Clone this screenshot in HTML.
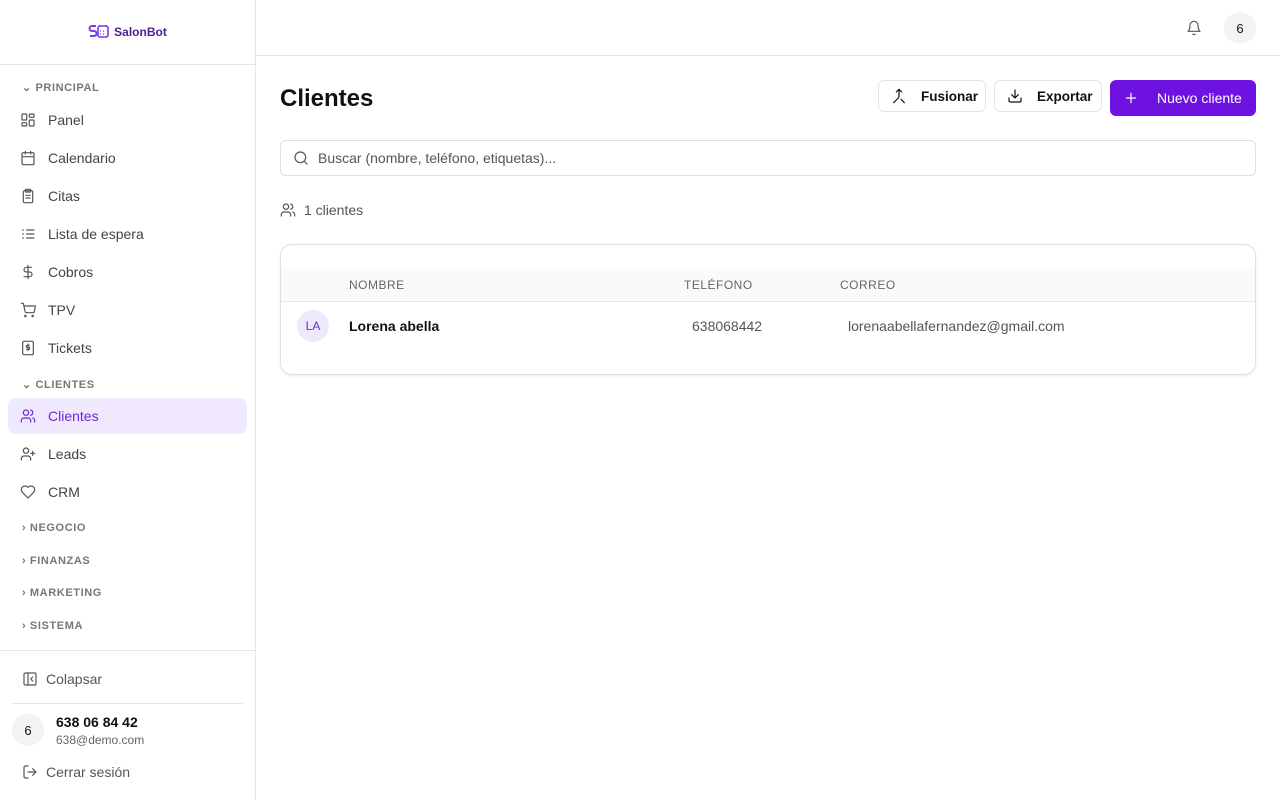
<!DOCTYPE html>
<html><head><meta charset="utf-8"><style>
*{box-sizing:border-box;margin:0;padding:0}
body{width:1280px;height:800px;font-family:"Liberation Sans",sans-serif;background:#fff;color:#111;position:relative;overflow:hidden}
.sb{position:absolute;left:0;top:0;width:256px;height:800px;border-right:1px solid #e5e5e5}
.logo{height:65px;border-bottom:1px solid #e5e5e5;display:flex;align-items:center;justify-content:center;gap:4px}
.logo b{font-size:12px;color:#4c1d95}
.sec{position:absolute;left:22px;font-size:11px;letter-spacing:.6px;color:#777;font-weight:bold;display:flex;align-items:center;gap:6px}
.it{position:absolute;left:8px;width:239px;height:36px;border-radius:8px;display:flex;align-items:center;padding-left:12px;gap:12px;font-size:14px;color:#444}
.it svg,.ic{width:16px;height:16px;fill:none;stroke:#555;stroke-width:1.8;stroke-linecap:round;stroke-linejoin:round}
.it.on{background:#f0e8fd;color:#6d28d9}
.it.on svg{stroke:#6d28d9}
.top{position:absolute;left:256px;top:0;right:0;height:56px;border-bottom:1px solid #e5e5e5}
.btn{position:absolute;height:32px;border:1px solid #e5e5e5;border-radius:6px;display:flex;align-items:center;font-size:14px;font-weight:bold;gap:14px;padding-left:12px;background:#fff}
</style></head><body>
<div class="sb">
<div class="logo"><svg width="22" height="18" viewBox="0 0 22 18"><path d="M8 3H4a2 2 0 0 0 0 5h2a2.5 2.5 0 0 1 0 5H2" stroke="#7c3aed" stroke-width="2" fill="none"/><rect x="10" y="3" width="10" height="11" rx="2" stroke="#7c3aed" stroke-width="1.6" fill="none"/><path d="M12 2v2M18 2v2M12 8h1M15 8h1M12 11h1M15 11h1" stroke="#7c3aed" stroke-width="1.3"/></svg><b>SalonBot</b></div>
<div class="sec" style="top:81px">⌄ PRINCIPAL</div>
<div class="it" style="top:102px"><svg viewBox="0 0 24 24"><rect x="3" y="3" width="7" height="9" rx="1"/><rect x="14" y="3" width="7" height="5" rx="1"/><rect x="14" y="12" width="7" height="9" rx="1"/><rect x="3" y="16" width="7" height="5" rx="1"/></svg>Panel</div>
<div class="it" style="top:140px"><svg viewBox="0 0 24 24"><rect x="3" y="4" width="18" height="18" rx="2"/><path d="M16 2v4M8 2v4M3 10h18"/></svg>Calendario</div>
<div class="it" style="top:178px"><svg viewBox="0 0 24 24"><rect x="5" y="4" width="14" height="18" rx="2"/><rect x="8" y="2" width="8" height="4" rx="1"/><path d="M9 11h6M9 15h6"/></svg>Citas</div>
<div class="it" style="top:216px"><svg viewBox="0 0 24 24"><path d="M10 6h11M10 12h11M10 18h11M4 6h1M4 12h1M4 18h1"/></svg>Lista de espera</div>
<div class="it" style="top:254px"><svg viewBox="0 0 24 24"><path d="M12 2v20M17 5H9.5a3.5 3.5 0 0 0 0 7h5a3.5 3.5 0 0 1 0 7H6"/></svg>Cobros</div>
<div class="it" style="top:292px"><svg viewBox="0 0 24 24"><circle cx="8" cy="21" r="1"/><circle cx="19" cy="21" r="1"/><path d="M2 2h3l2.7 12.4a2 2 0 0 0 2 1.6h9.7a2 2 0 0 0 2-1.6L23 6H6"/></svg>TPV</div>
<div class="it" style="top:330px"><svg viewBox="0 0 24 24"><rect x="4" y="2" width="16" height="20" rx="2"/><path d="M14 8h-3a1.5 1.5 0 0 0 0 3h2a1.5 1.5 0 0 1 0 3h-3M12 6v10"/></svg>Tickets</div>
<div class="sec" style="top:378px">⌄ CLIENTES</div>
<div class="it on" style="top:398px"><svg viewBox="0 0 24 24"><path d="M16 21v-2a4 4 0 0 0-4-4H6a4 4 0 0 0-4 4v2"/><circle cx="9" cy="7" r="4"/><path d="M22 21v-2a4 4 0 0 0-3-3.9M16 3.1a4 4 0 0 1 0 7.8"/></svg>Clientes</div>
<div class="it" style="top:436px"><svg viewBox="0 0 24 24"><path d="M16 21v-2a4 4 0 0 0-4-4H6a4 4 0 0 0-4 4v2"/><circle cx="9" cy="7" r="4"/><path d="M19 8v6M22 11h-6"/></svg>Leads</div>
<div class="it" style="top:474px"><svg viewBox="0 0 24 24"><path d="M19 14c1.5-1.5 3-3.2 3-5.5A5.5 5.5 0 0 0 16.5 3c-1.8 0-3 .5-4.5 2-1.5-1.5-2.7-2-4.5-2A5.5 5.5 0 0 0 2 8.5c0 2.3 1.5 4 3 5.5l7 7z"/></svg>CRM</div>
<div class="sec" style="top:522px">› NEGOCIO</div>
<div class="sec" style="top:555px">› FINANZAS</div>
<div class="sec" style="top:587px">› MARKETING</div>
<div class="sec" style="top:620px">› SISTEMA</div>
<div style="position:absolute;top:650px;left:0;width:255px;border-top:1px solid #e5e5e5"></div>
<div style="position:absolute;top:671px;left:22px;display:flex;gap:8px;align-items:center;font-size:14px;color:#555"><svg class="ic" viewBox="0 0 24 24"><rect x="3" y="3" width="18" height="18" rx="2"/><path d="M9 3v18M16 15l-3-3 3-3"/></svg>Colapsar</div>
<div style="position:absolute;top:703px;left:12px;width:231px;border-top:1px solid #e5e5e5"></div>
<div style="position:absolute;top:714px;left:12px;width:32px;height:32px;border-radius:50%;background:#f3f3f3;font-size:13px;display:flex;align-items:center;justify-content:center">6</div>
<div style="position:absolute;top:714px;left:56px;font-size:14px;font-weight:bold">638 06 84 42</div>
<div style="position:absolute;top:733px;left:56px;font-size:12px;color:#666">638@demo.com</div>
<div style="position:absolute;top:764px;left:22px;display:flex;gap:8px;align-items:center;font-size:14px;color:#555"><svg class="ic" viewBox="0 0 24 24"><path d="M9 21H5a2 2 0 0 1-2-2V5a2 2 0 0 1 2-2h4M16 17l5-5-5-5M21 12H9"/></svg>Cerrar sesión</div>
</div>
<div class="top">
<svg class="ic" style="position:absolute;left:930px;top:20px" viewBox="0 0 24 24"><path d="M6 8a6 6 0 0 1 12 0c0 7 3 9 3 9H3s3-2 3-9M10.3 21a1.9 1.9 0 0 0 3.4 0"/></svg>
<div style="position:absolute;left:968px;top:12px;width:32px;height:32px;border-radius:50%;background:#f3f3f3;font-size:13px;display:flex;align-items:center;justify-content:center">6</div>
</div>
<div style="position:absolute;left:280px;top:85px;font-size:24px;font-weight:bold">Clientes</div>
<div class="btn" style="left:878px;top:80px;width:108px;font-size:13.5px"><svg class="ic" viewBox="0 0 24 24" style="stroke:#111"><path d="M8 6l4-4 4 4M12 2v10.3a4 4 0 0 1-1.2 2.9L4 22M20 22l-5-5"/></svg>Fusionar</div>
<div class="btn" style="left:994px;top:80px;width:108px;font-size:13.5px"><svg class="ic" viewBox="0 0 24 24" style="stroke:#111"><path d="M21 15v4a2 2 0 0 1-2 2H5a2 2 0 0 1-2-2v-4M7 10l5 5 5-5M12 15V3"/></svg>Exportar</div>
<div class="btn" style="left:1110px;top:80px;width:146px;height:36px;background:#6d12e0;border-color:#6d12e0;color:#fff;font-weight:normal;gap:18px"><svg class="ic" viewBox="0 0 24 24" style="stroke:#fff"><path d="M12 5v14M5 12h14"/></svg>Nuevo cliente</div>
<div style="position:absolute;left:280px;top:140px;width:976px;height:36px;border:1px solid #e0e0e0;border-radius:6px;display:flex;align-items:center;padding-left:12px;gap:9px;font-size:14px;color:#555"><svg class="ic" viewBox="0 0 24 24"><circle cx="11" cy="11" r="8"/><path d="M21 21l-4.3-4.3"/></svg>Buscar (nombre, teléfono, etiquetas)...</div>
<div style="position:absolute;left:280px;top:202px;display:flex;gap:8px;align-items:center;font-size:14px;color:#555"><svg class="ic" viewBox="0 0 24 24"><path d="M16 21v-2a4 4 0 0 0-4-4H6a4 4 0 0 0-4 4v2"/><circle cx="9" cy="7" r="4"/><path d="M22 21v-2a4 4 0 0 0-3-3.9M16 3.1a4 4 0 0 1 0 7.8"/></svg>1 clientes</div>
<div style="position:absolute;left:280px;top:244px;width:976px;height:131px;border:1px solid #e0e0e0;border-radius:12px;box-shadow:0 1px 3px rgba(0,0,0,.08);overflow:hidden">
<div style="position:absolute;top:24px;left:0;right:0;height:33px;background:#fafafa;border-bottom:1px solid #e5e5e5;font-size:12px;color:#666;letter-spacing:.5px">
<span style="position:absolute;left:68px;top:9px">NOMBRE</span><span style="position:absolute;left:403px;top:9px">TELÉFONO</span><span style="position:absolute;left:559px;top:9px">CORREO</span></div>
<div style="position:absolute;left:16px;top:65px;width:32px;height:32px;border-radius:50%;background:#f0e8fd;color:#6d28d9;font-size:12px;display:flex;align-items:center;justify-content:center">LA</div>
<span style="position:absolute;left:68px;top:73px;font-size:14px;font-weight:bold">Lorena abella</span>
<span style="position:absolute;left:411px;top:73px;font-size:14px;color:#555">638068442</span>
<span style="position:absolute;left:567px;top:73px;font-size:14px;color:#555">lorenaabellafernandez@gmail.com</span>
</div>
</body></html>
